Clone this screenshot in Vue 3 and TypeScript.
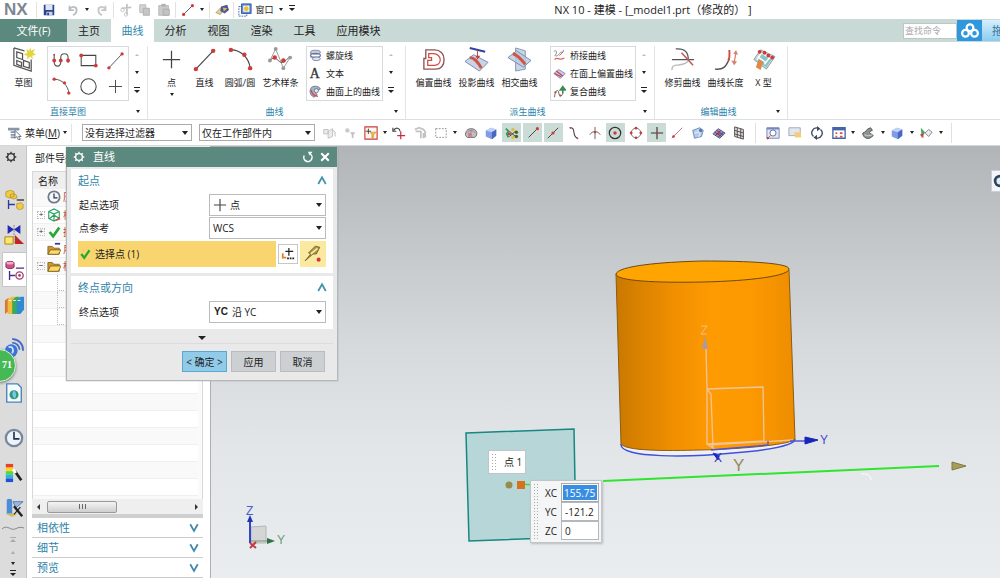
<script setup lang="ts">
import { ref } from 'vue'

const dot = (x: number, y: number, r = 1.8) => `<circle cx="${x}" cy="${y}" r="${r}" fill="#cf3a3a"/>`
const cube = '<path d="M2 5l6-3 6 2v7l-5 4-7-3z" fill="#7f9ce6"/><path d="M2 5l6-3 6 2-5 3z" fill="#c3d2fa"/><path d="M9 7l5-3v7l-5 4z" fill="#4a68be"/>'

/* 16 x 16 drawings */
const small: Record<string, string> = {
  save: '<path d="M2 2h12v12H2z" fill="#2d4391"/><path d="M4 2h8v6H4z" fill="#dfe6f2"/><path d="M5 10h7v4H5z" fill="#c9d1e4"/><path d="M6 11h2v3H6z" fill="#2d4391"/>',
  undo: '<path d="M4 3v5h5M4 7c3-4 9-3 8 2 0 2-2 4-4 5" fill="none" stroke="#b9bcc0" stroke-width="2"/>',
  redo: '<path d="M12 3v5H7M12 7c-3-4-9-3-8 2 0 2 2 4 4 5" fill="none" stroke="#c4c7ca" stroke-width="2"/>',
  cut: '<path d="M9 1v12M3 6l11-1" stroke="#bfc2c5" stroke-width="2"/><circle cx="4" cy="8" r="2" fill="none" stroke="#bfc2c5"/><circle cx="8" cy="13" r="2" fill="none" stroke="#bfc2c5"/>',
  copy: '<path d="M2 2h7v9H2z" fill="#d3d3d3" stroke="#b8b8b8"/><path d="M6 6h7v8H6z" fill="#c6c6c6" stroke="#adadad"/>',
  paste: '<path d="M2 3h11v11H2z" fill="#cbcbcb" stroke="#b5b5b5"/><path d="M5 1h5v3H5z" fill="#b0b0b0"/><path d="M7 7h7v7H7z" fill="#c2c2c2" stroke="#aaa"/>',
  line: '<path d="M3 13L13 3" stroke="#444"/>' + dot(3, 13) + dot(13, 3),
  brush: '<path d="M1 11l6-6 4 2-5 6z" fill="#e8d48a" stroke="#8a7a4a" stroke-width=".7"/><path d="M7 4l7-2 2 6-5 4-5-3z" fill="#44589f"/><path d="M9 5l5 1-4 4z" fill="#f0b23a"/>',
  windows: '<path d="M1 4h9v11H1z" fill="#fff" stroke="#3f63a8" stroke-dasharray="2 1"/><path d="M4 1h11v11H4z" fill="#5d8bd5" stroke="#2f56a0"/><path d="M6 3h7v7H6z" fill="#fff"/><circle cx="9.500" cy="6.500" r="2.800" fill="#f0c02c"/>',
  plus: '<path d="M8 1v14M1 8h14" stroke="#444" stroke-width="1.300"/>',
  helix: '<ellipse cx="8" cy="4" rx="6" ry="2.500" fill="#c8cde0" stroke="#6c789c"/><ellipse cx="8" cy="8" rx="6" ry="2.500" fill="none" stroke="#6c789c" stroke-width="1.500"/><ellipse cx="9" cy="12" rx="5" ry="2.300" fill="#dfe3ee" stroke="#6c789c"/><path d="M2 4v6h7" fill="none" stroke="#7c88ac"/>',
  letter: '<text x="1" y="14" font-family="Liberation Serif, serif" font-size="17" fill="#333" stroke="#333" stroke-width=".4">A</text>',
  surfcurve: '<path d="M3 3c4-3 10-1 11 2l-3 2c-3-2-4 2-1 5l-4 3C1 12 0 7 3 3z" fill="#a8b2c8" stroke="#5a6682"/><path d="M3 6c0 5 3 7 8 8" fill="none" stroke="#d34848" stroke-width="1.500"/><circle cx="9" cy="7" r="2.500" fill="#eef1f8" stroke="#5a6682"/>',
  bridge: '<path d="M1 3c4-3 4 3 2 4s1 3 4 0 1-3 3-3 3-1 3-3" fill="none" stroke="#777"/><path d="M2 13c3-4 5 2 12-2" fill="none" stroke="#d46a5c" stroke-width="1.500"/><path d="M8 8l5-5" stroke="#d24444"/>',
  offsurf: '<path d="M1 8l6-5 8 5-6 6z" fill="#c3cdee" stroke="#7182bb"/><path d="M4 5l8 6M2 8l8 4" stroke="#d13f3f" stroke-width="1.500"/>',
  composite: '<path d="M2 15c0-5 2-9 4-8s0 5 3 6 3-3 3-4" fill="none" stroke="#444"/><path d="M12 10V3M9 6l3-4 3 4z" fill="#3d8a52" stroke="#3d8a52" stroke-width="2"/>' + dot(3, 9, 1.4) + dot(9, 13, 1.4),
  menu: '<path d="M0 2h13v3H0zM3 6h6v2H3zM3 9h5v2H3zM3 12h5v2H3z" fill="#8796aa"/><path d="M8 5v9l2-2 2 4 2-1-2-3h3z" fill="#fff" stroke="#596577"/>',
  g1: '<path d="M2 4h5v5H2zM7 6l5-3v9l-5 2zM12 4l3 3v5" fill="#ececec" stroke="#bfbfbf"/>',
  g2: '<circle cx="5" cy="5" r="2.500" fill="#c9c9c9"/><path d="M8 7h6l-2 3v4l-2-1v-3z" fill="#c0c0c0"/>',
  filter: '<path d="M1 1h14v14H1z" fill="#fff6ee" stroke="#c93c3c" stroke-width="1.300"/><path d="M5 3v6M2 6h6" stroke="#333"/><path d="M7 7h7l-3 3v3l-2 1v-4z" fill="#f3bd4b" stroke="#b7822c" stroke-width=".6"/>',
  swap: '<path d="M2 5c2-4 7-3 7 1M1 2v4h4" fill="none" stroke="#444" stroke-width="1.300"/><path d="M10 6v9M6 11h9" stroke="#c22f3c" stroke-width="1.400"/>',
  g3: '<path d="M2 4l5-2 5 2 2 3v6M3 6h6v8M12 8v6" fill="none" stroke="#c2c2c2" stroke-width="2"/>',
  marquee: '<path d="M2 3h12v10H2z" fill="none" stroke="#888" stroke-dasharray="2 1.500"/>',
  shade: '<path d="M2 8c1-5 6-6 10-4 4 2 3 8 0 9H4c-2-1-3-3-2-5z" fill="#c5bcc0" stroke="#655c62"/><path d="M4 7c3-3 7-2 9 1M8 4v9" fill="none" stroke="#8d848b"/><path d="M5 7l4 3-4 3z" fill="#df7070"/>',
  cube,
  cluster: '<path d="M1 3l3 3-2 3 2 4" fill="none" stroke="#2a9a54" stroke-width="2"/><path d="M5 6l7 6M5 12l7-6" stroke="#333"/><circle cx="9" cy="4" r="2" fill="#dfc233"/><circle cx="9" cy="13" r="2" fill="#dfc233"/><circle cx="13" cy="7" r="2" fill="#555c2a"/><circle cx="13" cy="12" r="2" fill="#555c2a"/><circle cx="5" cy="9" r="1.700" fill="#c33"/>',
  endpt: '<path d="M3 13L13 3" stroke="#333"/>' + dot(13, 3),
  midpt: '<path d="M2 14L14 2" stroke="#333"/>' + dot(8, 8),
  bend: '<path d="M3 2c8-1 2 10 9 12" fill="none" stroke="#444" stroke-width="1.200"/>' + dot(4, 2, 1) + dot(12, 14, 1),
  cross: '<path d="M8 1v14M2 10c3-5 9-5 12 0" fill="none" stroke="#555"/>' + dot(8, 7, 1.4),
  center: '<circle cx="8" cy="8" r="6.500" fill="none" stroke="#333" stroke-width="1.400"/>' + dot(8, 8, 2),
  quad: '<circle cx="8" cy="8" r="5.500" fill="none" stroke="#666"/>' + dot(8, 2.5, 1.6) + dot(8, 13.5, 1.6) + dot(2.5, 8, 1.6) + dot(13.5, 8, 1.6),
  exist: '<path d="M8 1v14M1 8h14" stroke="#333" stroke-width="1.300"/>' + dot(8, 8, 1.2),
  tangent: '<path d="M2 14L14 2" stroke="#c06868"/>' + dot(4, 12, 1.5),
  face: '<path d="M2 5l8-3 4 3-2 7-8 2z" fill="#b5cbec" stroke="#6583ad"/><path d="M7 4c4 2 4 6 1 9M4 8l8-2" fill="none" stroke="#eef4ff"/><circle cx="11" cy="5" r="2" fill="#4f79b8"/>',
  mesh: '<path d="M1 9l6-6 8 5-6 6z" fill="#9b93c8" stroke="#565079"/><path d="M3 7l8 5M5 5l8 5M4 11l6-6M7 13l6-6" stroke="#42355e"/>' + dot(8, 8, 1.5),
  grid: '<path d="M3 1l10 3v11L3 12z" fill="#e9dede" stroke="#444"/><path d="M6 2v11M10 3v11M3 5l10 3M3 9l10 3" stroke="#444"/>',
  fit: '<path d="M1 2h14v12H1z" fill="#dfe6f6" stroke="#6f80b5"/><path d="M1 2h14v2H1z" fill="#7388c6"/><circle cx="8" cy="8" r="3.500" fill="#fff" stroke="#5c6688"/><path d="M5 11l-3 3" stroke="#d24444"/>' + dot(2, 14, 1.3),
  pan: '<path d="M1 2h13v9H1z" fill="#e3e6ef" stroke="#9aa3b8"/><path d="M7 7h8v6H8z" fill="#f1cf7a"/>',
  rotate: '<path d="M4 12A5.500 5.500 0 0 1 9 2.500M12 4a5.500 5.500 0 0 1-5 9.500" fill="none" stroke="#3c4963" stroke-width="1.500"/><path d="M8 0l4 3-4 3zM8 10v6l-4-3z" fill="#3c4963"/>',
  views: '<path d="M1 2h14v12H1z" fill="#fff" stroke="#4464ab" stroke-width="1.500"/><path d="M1 2h14v3H1z" fill="#4464ab"/><path d="M4 7h2v2H4zM9 7h3v2H9zM4 11h2v2H4zM9 11h3v2H9z" fill="#cf5050"/>',
  section: '<path d="M2 8c3 0 4-5 9-6l2 3c-4 1-4 4-1 4l2 2-4 3c-5 1-8-2-8-6z" fill="#8f9490" stroke="#434b46"/><path d="M4 10c3 2 6 1 9 0" fill="none" stroke="#ddd"/>',
  rank: '<path d="M2 2l5 5-4 7z" fill="#49a963"/><path d="M1 10l4-2v6z" fill="#cc4444"/><path d="M7 8l4-4 4 3-4 5z" fill="#ececf3" stroke="#7e7986"/>',
  gear: '<circle cx="8" cy="8" r="4.500" fill="none" stroke="currentColor" stroke-width="1.800"/><path d="M8 1v3M8 12v3M1 8h3M12 8h3M3 3l2 2M11 11l2 2M3 13l2-2M11 5l2-2" stroke="currentColor" stroke-width="1.800"/>',
  reset: '<path d="M3 6a5.500 5.500 0 1 0 8-2" fill="none" stroke="#fff" stroke-width="2"/><path d="M8 1h6l-4 5z" fill="#fff"/>',
  close: '<path d="M3 3l10 10M13 3L3 13" stroke="#fff" stroke-width="2.800"/>',
  up: '<path d="M3 12l5-9 5 9" fill="none" stroke="#4493ad" stroke-width="2.400"/>',
  down: '<path d="M3 3l5 9 5-9" fill="none" stroke="#4488ad" stroke-width="2.400"/>',
  tick: '<path d="M3 8l4 5 7-10" fill="none" stroke="#2aa737" stroke-width="3"/>',
  clock: '<circle cx="8" cy="8" r="6.500" fill="#f6f8fa" stroke="#6f7c8d" stroke-width="2"/><path d="M8 4v5h4" fill="none" stroke="#24344c" stroke-width="1.400"/>',
  box: '<path d="M2 4l6-3 6 3v8l-6 3-6-3zM2 4l6 3 6-3M8 7v8M3 12l5-4 6 4" fill="none" stroke="#29a162" stroke-width="1.300"/><path d="M10 14l5-2" stroke="#d34c3d" stroke-width="2"/>',
  folder: '<path d="M1 4h5l2 2h6v8H1z" fill="#c9962f" stroke="#6e4f16" stroke-width=".8"/><path d="M1 14l3-6h12l-3 6z" fill="#ffd968" stroke="#6e4f16" stroke-width=".8"/>',
  folderx: '<path d="M1 5h5l2 2h6v7H1z" fill="#c9962f" stroke="#6e4f16" stroke-width=".8"/><path d="M1 14l3-5h12l-3 5z" fill="#ffd968" stroke="#6e4f16" stroke-width=".8"/><path d="M9 2h6" stroke="#3b3690" stroke-width="2"/>',
  pointdlg: '<path d="M9 1v9M5 5h9" stroke="#222" stroke-width="1.400"/><path d="M2 7v5h4" fill="none" stroke="#e0812f" stroke-width="2"/><path d="M7 13h2M10 13h2M13 13h2" stroke="#222" stroke-width="2"/>',
  infer: '<path d="M1 14l5-6-2-1 6-6 4 1-3 6H8z" fill="#b09440" stroke="#655522" stroke-width=".7"/><path d="M12 3L6 8" stroke="#f6e7a4" stroke-width="1.500"/>' + dot(13, 13, 1.8),
  cloud: '<g fill="none" stroke="#fff" stroke-width="2"><circle cx="8" cy="5" r="3"/><circle cx="4" cy="10" r="3"/><circle cx="12" cy="10" r="3"/></g>',
}

/* 26 x 26 drawings */
const large: Record<string, string> = {
  sketch: '<path d="M3 1v18l18 6V13M3 1l11 3" fill="none" stroke="#555" stroke-width="1.300"/><path d="M6 5l6 2v6l-6-2zM6 14l5 2v4l-5-2zM13 14l6 2v6l-6-2z" fill="none" stroke="#555" stroke-width="1.300"/><path d="M20 0l1 4 4-2-2 4 3 2-4 1 1 4-3-3-3 3v-4l-4-1 4-2-1-4 3 2z" fill="#e3d441"/>',
  point: '<path d="M13 4v18M4 13h18" stroke="#444" stroke-width="1.300"/>',
  line: '<path d="M4 23L22 4" stroke="#444" stroke-width="1.200"/>' + dot(4, 23, 2.3) + dot(22, 4, 2.3),
  arc: '<path d="M3 3c11 0 19 9 20 19" fill="none" stroke="#444" stroke-width="1.200"/>' + dot(3, 3, 2.3) + dot(17, 8, 2.3) + dot(23, 22, 2.3),
  spline: '<path d="M2 14L8 2l8 20 7-11" fill="none" stroke="#999"/><path d="M2 14c7-7 8 3 13 2s4-5 8-5" fill="none" stroke="#555"/><g fill="#999"><circle cx="2" cy="14" r="2"/><circle cx="8" cy="2" r="2"/><circle cx="16" cy="22" r="2"/><circle cx="23" cy="11" r="2"/></g>' + dot(7, 11, 2.3) + dot(16, 14, 2.3),
  offset: '<path d="M5 3h9c6 0 10 4 10 10s-3 10-9 10H3V12h2z" fill="none" stroke="#8c5554" stroke-width="1.400"/><path d="M8 7h5c4 0 7 3 7 6s-2 6-6 6H7v-5h4v-3H8z" fill="none" stroke="#d24b42" stroke-width="1.300"/>',
  project: '<path d="M1 15l9-7 15 8-9 9z" fill="#c7d4ea" stroke="#7a8db2"/><path d="M6 11c5 0 8 4 12 11" fill="none" stroke="#d0553e" stroke-width="3"/><path d="M6 1l16 4" stroke="#3142a0" stroke-width="2"/><path d="M14 3v7" stroke="#b54444"/><path d="M12 9h5l-3 4z" fill="#c63a3a"/>',
  intersect: '<path d="M9 1l10 3v19l-10 2z" fill="#c8d6e6" stroke="#8195b4"/><path d="M1 11l9-7 15 10-8 7z" fill="#b8c9e4" stroke="#7a8db2" fill-opacity=".8"/><path d="M6 7c5 1 9 6 13 11" fill="none" stroke="#d0563e" stroke-width="3"/>',
  trim: '<path d="M6 2c10-1 13 4 13 11M2 13h23" fill="none" stroke="#555" stroke-width="1.300"/><path d="M2 24c0-7 5-4 11-6 4-1 6-3 6-5" fill="none" stroke="#bbb" stroke-width="1.500"/><path d="M12 6l12 13" stroke="#c55656" stroke-width="1.600"/>',
  length: '<path d="M2 23c9 1 12-3 15-11" fill="none" stroke="#555" stroke-width="1.500"/><path d="M16 14c2-4 1-7 1-11" fill="none" stroke="#cf4c43" stroke-width="2"/><path d="M24 5l-2 11" stroke="#cf7a63" stroke-width="1.200"/><path d="M21 7l3-4 2 5zM19 14l3 5 3-4z" fill="#d68468"/>',
  xform: '<path d="M3 13L10 3l15 7-9 13z" fill="#cfdcdc" stroke="#8b9b9b"/><path d="M4 14l6-7 12 5-6 9z" fill="#86c6cb"/><path d="M7 10l8 6M11 6l9 6M6 14l5-8M14 18l6-8" stroke="#fff" stroke-width="1.500"/><path d="M8 13l5 2-3 9-5-3z" fill="#e08a4a"/>' + dot(9, 5, 2) + dot(14, 6, 2) + dot(18, 9, 2) + dot(22, 11, 2),
  snake: '<path d="M3 5v9c0 9 9 9 9 0V9c0-7 10-7 10 0v7" fill="none" stroke="#555" stroke-width="1.500"/>' + dot(3, 13, 2.6) + dot(12, 13, 2.6) + dot(22, 13, 2.6) + dot(3, 5, 1.3),
  rect: '<path d="M3 6h20v14H3z" fill="none" stroke="#444" stroke-width="1.400"/>' + dot(3, 6, 2.6) + dot(23, 20, 2.6),
  circle: '<circle cx="13" cy="13" r="10.500" fill="none" stroke="#444" stroke-width="1.400"/>',
}

/* 22 x 22 drawings of the resource bar */
const bar: Record<string, string> = {
  assembly: '<g fill="#f2cb43" stroke="#a8831e" stroke-width=".7"><path d="M2 2l5-2 4 2v5l-5 2-4-2zM7 5l4-1 3 2v3l-4 1-3-2zM14 15l5-1 2 2v4l-4 2-3-2z"/></g><path d="M5 11v10M5 16h7" stroke="#3138a0" stroke-width="1.500"/><path d="M14 11h8" stroke="#333" stroke-width="1.500"/>',
  constraint: '<path d="M4 0l7 5-7 5zM18 0l-7 5 7 5z" fill="#2328b4"/><path d="M11 0v20" stroke="#777" stroke-dasharray="2 1"/><path d="M1 13h9v8H1z" fill="#ffe766" stroke="#9e8120"/><path d="M12 11l10 10H12z" fill="#c52323"/>',
  part: '<path d="M1 3c1-2 8-2 9 0v5c-1 2-8 2-9 0z" fill="#cc5187" stroke="#833055"/><ellipse cx="5.500" cy="3.500" rx="4" ry="1.500" fill="#efabc9"/><path d="M12 9h9M5 12v10M5 17h6" stroke="#42318a" stroke-width="1.500"/><circle cx="16" cy="17" r="4" fill="none" stroke="#a3406c" stroke-width="1.500"/><circle cx="16" cy="17" r="1.500" fill="#a3406c"/>',
  library: '<path d="M1 6l4-3v15l-4 3z" fill="#d67935"/><path d="M4 6l4-4h4v16l-3 3H4z" fill="#f1bc3a"/><path d="M9 6l4-4h4v16l-3 3H9z" fill="#3ea85a"/><path d="M14 6l4-4h4v14l-4 5h-4z" fill="#2f8bd0"/><path d="M5 6h3M10 6h3M15 6h3" stroke="#fff"/>',
  web: '<circle cx="8" cy="14" r="7" fill="#3b72d5"/><path d="M5 10c5-1 6 3 4 7" fill="none" stroke="#d3e4ff" stroke-width="2"/><path d="M9 1c8 1 12 6 12 13M9 5c5 0 8 4 8 8" fill="none" stroke="#426bc3" stroke-width="2"/>',
  doc: '<path d="M3 1h12l4 4v16H3z" fill="#f6fbff" stroke="#4a85b4" stroke-width="1.500"/><circle cx="11" cy="13" r="5" fill="#2d9b76"/><path d="M11 8c3 3 3 6 1 9-3-2-4-5-1-9z" fill="#7cc4e8"/>',
  history: '<circle cx="11" cy="11" r="9" fill="#edf3f9" stroke="#77889c" stroke-width="2.500"/><path d="M11 4v8h6" fill="none" stroke="#1f3357" stroke-width="1.800"/>',
  palette: '<path d="M2 1h8v4H2z" fill="#e94224"/><path d="M2 5h8v4H2z" fill="#ffd51f"/><path d="M2 9h8v4H2z" fill="#5bd63b"/><path d="M2 13h8v4H2z" fill="#26b6e8"/><path d="M2 17h8v4H2z" fill="#2252d0"/><path d="M12 9l7 10" stroke="#222" stroke-width="3"/><path d="M10 7l3 4" stroke="#fff" stroke-width="3"/>',
  roles: '<path d="M1 17h14l-6 4z" fill="#d7bb5e"/><path d="M3 2c2-2 6-1 6 1v14H3z" fill="#4c8dd3"/><path d="M10 4h11l-8 7z" fill="#9ab6db" stroke="#537cb4"/><path d="M11 9l9 11" stroke="#222" stroke-width="2.600"/><path d="M18 10l-7 8" stroke="#222" stroke-width="1.300"/>',
}

const tabs = ['主页', '曲线', '分析', '视图', '渲染', '工具', '应用模块']
const activeTab = ref('曲线')

const gallery = ['snake', 'rect', 'line', 'arc', 'circle', 'point']

interface Tool { icon: string; label: string; w: string; drop?: boolean }
interface Group { name: string; cls: string; tools: Tool[]; list: { icon: string; label: string }[] }
const groups: Group[] = [
  {
    name: '曲线', cls: 'curve',
    tools: [
      { icon: 'point', label: '点', w: 'narrow', drop: true },
      { icon: 'line', label: '直线', w: 'narrow' },
      { icon: 'arc', label: '圆弧/圆', w: 'mid' },
      { icon: 'spline', label: '艺术样条', w: 'wide' },
    ],
    list: [{ icon: 'helix', label: '螺旋线' }, { icon: 'letter', label: '文本' }, { icon: 'surfcurve', label: '曲面上的曲线' }],
  },
  {
    name: '派生曲线', cls: 'derived',
    tools: [
      { icon: 'offset', label: '偏置曲线', w: 'wide' },
      { icon: 'project', label: '投影曲线', w: 'wide' },
      { icon: 'intersect', label: '相交曲线', w: 'wide' },
    ],
    list: [{ icon: 'bridge', label: '桥接曲线' }, { icon: 'offsurf', label: '在面上偏置曲线' }, { icon: 'composite', label: '复合曲线' }],
  },
  {
    name: '编辑曲线', cls: 'edit',
    tools: [
      { icon: 'trim', label: '修剪曲线', w: 'wide' },
      { icon: 'length', label: '曲线长度', w: 'wide' },
      { icon: 'xform', label: 'X 型', w: 'narrow' },
    ],
    list: [],
  },
]

interface SelTool { icon: string; title: string; on?: boolean; drop?: boolean }
const selectTools: SelTool[] = [
  { icon: 'g1', title: '组件' }, { icon: 'g2', title: '细节过滤' }, { icon: 'filter', title: '过滤', drop: true },
  { icon: 'swap', title: '重置' }, { icon: 'g3', title: '恢复' }, { icon: 'marquee', title: '框选', drop: true },
]
const snapTools: SelTool[] = [
  { icon: 'shade', title: '高亮' }, { icon: 'cube', title: '体' }, { icon: 'cluster', title: '捕捉点', on: true },
  { icon: 'endpt', title: '端点', on: true }, { icon: 'midpt', title: '中点', on: true }, { icon: 'bend', title: '控制点' },
  { icon: 'cross', title: '交点' }, { icon: 'center', title: '圆心', on: true }, { icon: 'quad', title: '象限点' },
  { icon: 'exist', title: '现有点', on: true }, { icon: 'tangent', title: '相切' }, { icon: 'face', title: '面上的点' },
  { icon: 'mesh', title: '网格' }, { icon: 'grid', title: '栅格点' },
]
const viewTools: SelTool[] = [
  { icon: 'fit', title: '适合窗口' }, { icon: 'pan', title: '缩放' }, { icon: 'rotate', title: '旋转' },
  { icon: 'views', title: '视图', drop: true }, { icon: 'section', title: '剖切', drop: true },
  { icon: 'cube', title: '着色', drop: true }, { icon: 'rank', title: '显示', drop: true },
]

const resources = [
  { icon: 'assembly', title: '装配' }, { icon: 'constraint', title: '约束' }, { icon: 'part', title: '部件', on: true },
  { icon: 'library', title: '重用库' }, { icon: 'web', title: '浏览器' }, { icon: 'doc', title: '文档' },
  { icon: 'history', title: '历史' }, { icon: 'palette', title: '材料' }, { icon: 'roles', title: '角色' },
]

const tree = [
  { icon: 'clock', sign: '', text: '历' },
  { icon: 'box', sign: '+', text: '模' },
  { icon: 'tick', sign: '+', text: '摄' },
  { icon: 'folderx', sign: '', text: '用' },
  { icon: 'folder', sign: '−', text: '模' },
]
const panels = ['相依性', '细节', '预览']

const startOption = ref('点')
const reference = ref('WCS')
const endOption = ref('沿 YC')
const coords = ref([
  { axis: 'XC', value: '155.75' },
  { axis: 'YC', value: '-121.2' },
  { axis: 'ZC', value: '0' },
])
</script>

<template>
  <div class="app">
    <header class="titlebar">
      <b class="brand">NX</b>
      <i class="sep"></i>
      <button class="qa" aria-label="保存"><svg viewBox="0 0 16 16" v-html="small.save" /></button>
      <i class="sep clear"></i>
      <button class="qa" aria-label="撤消"><svg viewBox="0 0 16 16" v-html="small.undo" /></button>
      <i class="tri"></i>
      <button class="qa" aria-label="重做"><svg viewBox="0 0 16 16" v-html="small.redo" /></button>
      <i class="sep"></i>
      <button class="qa" aria-label="剪切"><svg viewBox="0 0 16 16" v-html="small.cut" /></button>
      <button class="qa" aria-label="复制"><svg viewBox="0 0 16 16" v-html="small.copy" /></button>
      <button class="qa" aria-label="粘贴"><svg viewBox="0 0 16 16" v-html="small.paste" /></button>
      <i class="sep"></i>
      <button class="qa" aria-label="直线"><svg viewBox="0 0 16 16" v-html="small.line" /></button>
      <i class="tri"></i>
      <i class="sep"></i>
      <button class="qa" aria-label="格式"><svg viewBox="0 0 16 16" v-html="small.brush" /></button>
      <i class="sep"></i>
      <button class="win"><svg viewBox="0 0 16 16" v-html="small.windows" />窗口</button>
      <i class="tri"></i>
      <i class="tri bar"></i>
      <h1>NX 10 - 建模 - [_model1.prt（修改的） ]</h1>
    </header>

    <nav class="tabs">
      <button class="file">文件(F)</button>
      <button v-for="t in tabs" :key="t" class="tab" :class="{ on: t === activeTab }" @click="activeTab = t">{{ t }}</button>
      <input class="search" aria-label="查找命令" placeholder="查找命令" />
      <button class="cloud" aria-label="云"><svg viewBox="0 0 16 16" v-html="small.cloud" /></button>
      <button class="drag">拖</button>
    </nav>

    <section class="ribbon">
      <div class="group sketch">
        <div class="tools">
          <button class="tool wide"><svg viewBox="0 0 26 26" v-html="large.sketch" /><span>草图</span></button>
          <div class="gallery">
            <button v-for="g in gallery" :key="g" :aria-label="g"><svg viewBox="0 0 26 26" v-html="large[g]" /></button>
          </div>
          <div class="scroller"><i class="tri off"></i><i class="tri"></i><i class="tri bar"></i></div>
        </div>
        <div class="caption"><span>直接草图</span><i class="tri"></i></div>
      </div>
      <div v-for="g in groups" :key="g.name" class="group" :class="g.cls">
        <div class="tools">
          <button v-for="t in g.tools" :key="t.label" class="tool" :class="t.w">
            <svg viewBox="0 0 26 26" v-html="large[t.icon]" /><span>{{ t.label }}</span><i v-if="t.drop" class="tri"></i>
          </button>
          <div v-if="g.list.length" class="list">
            <button v-for="l in g.list" :key="l.label"><svg viewBox="0 0 16 16" v-html="small[l.icon]" />{{ l.label }}</button>
          </div>
          <div v-if="g.list.length" class="scroller"><i class="tri off"></i><i class="tri"></i><i class="tri bar"></i></div>
        </div>
        <div class="caption"><span>{{ g.name }}</span><i class="tri"></i></div>
      </div>
    </section>

    <section class="selbar">
      <button class="menu"><svg viewBox="0 0 16 16" v-html="small.menu" /><span>菜单(<u>M</u>)</span><i class="tri"></i></button>
      <label class="combo filter"><select aria-label="选择过滤器"><option>没有选择过滤器</option></select><i class="tri big"></i></label>
      <label class="combo scope"><select aria-label="选择范围"><option>仅在工作部件内</option></select><i class="tri big"></i></label>
      <div class="strip pick">
        <template v-for="s in selectTools" :key="s.title">
          <button :aria-label="s.title"><svg viewBox="0 0 16 16" v-html="small[s.icon]" /></button><i v-if="s.drop" class="tri"></i>
        </template>
      </div>
      <div class="strip snap">
        <button v-for="s in snapTools" :key="s.title" :class="{ on: s.on }" :aria-label="s.title"><svg viewBox="0 0 16 16" v-html="small[s.icon]" /></button>
      </div>
      <div class="strip view">
        <template v-for="s in viewTools" :key="s.title">
          <button :aria-label="s.title"><svg viewBox="0 0 16 16" v-html="small[s.icon]" /></button><i v-if="s.drop" class="tri"></i>
        </template>
      </div>
    </section>

    <main class="work">
      <aside class="resources">
        <button class="cog" aria-label="设置"><svg viewBox="0 0 16 16" v-html="small.gear" /></button>
        <button v-for="r in resources" :key="r.icon" class="res" :class="[r.icon, { on: r.on }]" :aria-label="r.title"><svg viewBox="0 0 22 22" v-html="bar[r.icon]" /></button>
        <div class="paging">
          <svg class="wave" viewBox="0 0 24 6"><path d="M1 4c5-5 9 2 13 0s6-2 9-1" fill="none" stroke="#888" /></svg>
          <i class="tri upw bar"></i><i class="tri upw"></i><i class="tri"></i><i class="tri bar"></i>
        </div>
        <b class="badge">71</b>
      </aside>

      <aside class="navigator">
        <h2>部件导航器</h2>
        <div class="treebox">
          <table>
            <thead><tr><th>名称</th></tr></thead>
            <tbody>
              <tr v-for="(r, i) in tree" :key="i">
                <td><div class="node"><i class="sign" :class="{ boxed: r.sign }">{{ r.sign }}</i><svg viewBox="0 0 16 16" v-html="small[r.icon]" /><span>{{ r.text }}</span></div></td>
              </tr>
              <tr v-for="n in 14" :key="'e' + n"><td><i v-if="n < 4" class="branch"></i></td></tr>
            </tbody>
          </table>
        </div>
        <div class="hscroll"><i class="arrow left"></i><span class="thumb"><i></i><i></i><i></i></span><i class="arrow right"></i></div>
        <button v-for="p in panels" :key="p" class="panel"><span>{{ p }}</span><svg viewBox="0 0 16 16" v-html="small.down" /></button>
      </aside>

      <section class="canvas">
        <svg class="scene">
          <defs>
            <linearGradient id="side" x1="0" x2="1">
              <stop offset="0" stop-color="#c97800" /><stop offset=".12" stop-color="#d98100" />
              <stop offset=".32" stop-color="#f08f00" /><stop offset=".55" stop-color="#ff9b02" />
              <stop offset=".75" stop-color="#fd9900" /><stop offset="1" stop-color="#ed8d00" />
            </linearGradient>
          </defs>
          <g transform="translate(-211 -146)">
            <path d="M621 444C619 459 693 457 733 453c38-3 62-8 62-14" fill="#eef0f8" stroke="#4150d8" stroke-width="1.500" />
            <path d="M616 274L621 444C626 451 665 451 700 450c47-1 93-6 95-11L789 270z" fill="url(#side)" stroke="#8c5b14" />
            <path d="M616 274c2-8 44-12 87-13 46 0 86 2 86 8 0 7-39 12-86 13-46 1-87-1-87-8z" fill="#ffa400" stroke="#6e4a12" />
            <g fill="none" stroke="#f2c49b" stroke-width="1.300">
              <path d="M706 345l1 44 56-2 1 54-57 3v-55l4 5 2 54-6-4" />
              <path d="M708 445l85-5" />
            </g>
            <path d="M702 349l3-13 3 13z" fill="#a99ba0" />
            <path d="M701 326h6l-6 8h6" fill="none" stroke="#efc18f" />
            <path d="M711 450l57-5v-4M790 441h16" fill="none" stroke="#4a55dc" stroke-width="1.300" />
            <path d="M805 437l13 3-13 4zM713 453l6 3-1 4z" fill="#1825b8" stroke="#1825b8" />
            <text x="820" y="444" class="axis" fill="#4449d2">Y</text>
            <text x="714" y="462" class="axis" fill="#2930c8">X</text>
            <text x="733" y="471" class="axis wide" fill="#948b5d">Y</text>
            <path d="M603 481l336-15" stroke="#2fe52f" stroke-width="2" />
            <path d="M952 462l14 4-14 4z" fill="#a99d55" stroke="#81783f" />
            <path d="M861 474c5-1 10 1 10 6" fill="none" stroke="#fff" stroke-width="1" />
            <path d="M466 433l108-4 2 108-107 4z" fill="#b6d6d7" stroke="#168781" stroke-width="1.500" />
            <path d="M521 484l12 1" stroke="#2fe52f" stroke-width="1.500" />
            <circle cx="509" cy="485" r="3.500" fill="#9a8a4c" />
            <path d="M517 481h8v8h-8z" fill="#d7721c" />
            <path d="M251 527l15-1v17h-15z" fill="#d4d6d6" stroke="#b4b6b8" />
            <path d="M250 543v-22" stroke="#3246c8" stroke-width="2" />
            <path d="M247 522l3-7 3 7z" fill="#1f35b8" />
            <path d="M251 541h18" stroke="#789579" />
            <path d="M267 538l8 3-8 3z" fill="#2d7140" />
            <text x="246" y="515" class="axis" fill="#4761c8">Z</text>
            <text x="277" y="544" class="axis" fill="#699a76">Y</text>
            <path d="M250 543l6 5M256 542l-6 6" stroke="#c53b44" stroke-width="2" />
          </g>
        </svg>
        <div class="point"><i class="grip"></i><span>点 1</span></div>
        <div class="coords">
          <i class="grip"></i>
          <div class="fields">
            <label v-for="(c, i) in coords" :key="c.axis"><span>{{ c.axis }}</span><input v-model="c.value" :class="{ picked: i === 0 }" /></label>
          </div>
        </div>
        <button class="sidetab" aria-label="展开"><svg viewBox="0 0 9 22"><path d="M9 4a7 7 0 0 0 0 14z" fill="#2f4261" /><path d="M9 7a4 4 0 0 0 0 8z" fill="#e1edf6" /></svg></button>
      </section>

      <form class="dialog" @submit.prevent>
        <div class="head">
          <svg viewBox="0 0 16 16" v-html="small.gear" /><h2>直线</h2>
          <button type="button" aria-label="重置"><svg viewBox="0 0 16 16" v-html="small.reset" /></button>
          <button type="button" aria-label="关闭"><svg viewBox="0 0 16 16" v-html="small.close" /></button>
        </div>
        <fieldset>
          <button type="button" class="fold"><span>起点</span><svg viewBox="0 0 16 16" v-html="small.up" /></button>
          <div class="row"><label for="start">起点选项</label>
            <div class="combo"><svg viewBox="0 0 16 16" v-html="small.plus" /><select id="start" v-model="startOption"><option>点</option></select><i class="tri big"></i></div>
          </div>
          <div class="row"><label for="refr">点参考</label>
            <div class="combo"><select id="refr" v-model="reference" class="flush"><option>WCS</option></select><i class="tri big"></i></div>
          </div>
          <div class="row pickrow">
            <button type="button" class="selected"><svg viewBox="0 0 16 16" v-html="small.tick" />选择点 (1)</button>
            <button type="button" class="ptdlg" aria-label="点对话框"><svg viewBox="0 0 16 16" v-html="small.pointdlg" /></button>
            <button type="button" class="infer" aria-label="自动判断的点"><svg viewBox="0 0 16 16" v-html="small.infer" /></button>
          </div>
        </fieldset>
        <fieldset>
          <button type="button" class="fold"><span>终点或方向</span><svg viewBox="0 0 16 16" v-html="small.up" /></button>
          <div class="row"><label for="end">终点选项</label>
            <div class="combo"><b>YC</b><select id="end" v-model="endOption"><option>沿 YC</option></select><i class="tri big"></i></div>
          </div>
        </fieldset>
        <div class="more"><i class="tri big"></i></div>
        <div class="actions">
          <button class="ok">&lt; 确定 &gt;</button><button type="button">应用</button><button type="button">取消</button>
        </div>
      </form>
    </main>
  </div>
</template>

<style>
html, body { margin: 0; height: 100%; overflow: hidden; }
</style>

<style scoped>
.app { display: flex; flex-direction: column; height: 100vh; background: #fff; color: #222; font: 10px/14px "Open Sans", "Noto Sans CJK SC", sans-serif; overflow: hidden; }
.app * { box-sizing: border-box; }
button { margin: 0; padding: 0; border: 0; background: none; color: inherit; font: inherit; display: flex; align-items: center; justify-content: center; white-space: nowrap; }
h1, h2 { margin: 0; font-weight: normal; white-space: nowrap; }
svg { display: block; flex: none; width: 14px; height: 14px; }
.tri { flex: none; display: block; width: 0; border: 2px solid transparent; border-top: 3px solid #222; border-bottom: 0; position: relative; }
.tri.big { border-width: 4px 4px 0; }
.tri.off { border-top: 0; border-bottom: 2px solid #bbb; }
.tri.upw { border-top: 0; border-bottom: 3px solid #aaa; }
.tri.bar { border-width: 3px 3px 0; }
.tri.bar::before { content: ""; position: absolute; left: -3px; top: -6px; width: 6px; height: 1px; background: #222; }
.tri.upw.bar { border-width: 0 3px 3px; }
.tri.upw.bar::before { background: #aaa; top: -2px; }

.titlebar { display: flex; align-items: center; height: 19px; flex: none; padding-left: 4px; }
.titlebar .brand { width: 30px; font: bold 17px/19px "Liberation Sans", sans-serif; color: #7d8791; }
.sep { width: 1px; height: 16px; background: #e2e2e2; flex: none; margin: 0 2px; }
.sep.clear { background: none; }
.qa { width: 19px; flex: none; }
.titlebar .tri { margin: 0 3px; }
.win { width: 40px; gap: 3px; font-size: 9px; }
.titlebar h1 { flex: 1; text-align: center; padding-left: 8px; font-size: 11px; line-height: 16px; }

.tabs { display: flex; align-items: center; height: 23px; flex: none; background: #c9d9d5; font-size: 11px; overflow: hidden; }
.file { width: 67px; height: 23px; background: #5c897e; color: #fff; }
.tab { height: 23px; width: 43px; flex: none; }
.file + .tab { width: 44px; }
.tab:nth-of-type(8) { width: 65px; }
.tab.on { background: #fff; color: #2d87ad; }
.search { margin-left: auto; width: 54px; height: 16px; padding: 0 1px; border: 1px solid #bcc8c4; background: #fff; font: inherit; font-size: 9px; }
.search::placeholder { color: #aaa; opacity: 1; }
.cloud { width: 25px; height: 21px; background: #2e97dd; }
.cloud svg { width: 18px; height: 18px; }
.drag { width: 18px; height: 21px; background: linear-gradient(#d5effd, #8cccf1); color: #41759a; justify-content: flex-start; padding-left: 10px; overflow: hidden; }

.ribbon { display: flex; height: 78px; flex: none; border-bottom: 1px solid #dcdfe1; padding: 4px 0 0; font-size: 9px; line-height: 13px; }
.group { display: flex; flex-direction: column; justify-content: space-between; border-right: 1px solid #e2e4e5; }
.group.sketch { width: 148px; }
.group.curve { width: 258px; padding-left: 7px; }
.group.derived { width: 249px; padding-left: 6px; }
.group.edit { width: 133px; padding-left: 6px; }
.tools { display: flex; }
.tool { flex-direction: column; justify-content: flex-start; height: 55px; }
.tool svg { width: 25px; height: 25px; margin: 1px 0 4px; }
.tool .tri { margin-top: 4px; }
.tool.narrow { width: 33px; }
.tool.mid { width: 38px; }
.tool.wide { width: 43px; }
.sketch .tool.wide { width: 47px; }
.gallery { display: grid; grid-template-columns: repeat(3, 27px); height: 55px; border: 1px solid #d7dadd; width: 82px; }
.gallery svg { width: 19px; height: 19px; }
.list { display: flex; flex-direction: column; border: 1px solid #d7dadd; height: 55px; }
.curve .list { width: 77px; margin-left: 4px; }
.derived .list { width: 86px; margin-left: 9px; }
.list button { flex: 1; justify-content: flex-start; gap: 4px; padding-left: 2px; }
.list svg { width: 13px; height: 13px; }
.scroller { width: 15px; display: flex; flex-direction: column; align-items: center; justify-content: space-around; }
.caption { display: flex; align-items: center; color: #2b83ab; padding-right: 7px; height: 15px; }
.caption span { flex: 1; text-align: center; }

.selbar { display: flex; align-items: center; height: 26px; flex: none; border-bottom: 1px solid #d5d8d9; }
.menu { width: 72px; height: 18px; gap: 3px; padding-left: 4px; border-right: 1px solid #e3e3e3; }
.combo { display: flex; align-items: center; position: relative; border: 1px solid #aaa; background: #fff; height: 17px; }
.combo select { appearance: none; border: 0; padding: 0 2px; margin: 0; background: none; color: inherit; font: inherit; flex: 1; min-width: 0; outline: none; }
.combo .tri { margin-right: 3px; border-width: 4px 3px 0; }
.combo.filter { width: 110px; margin-left: 10px; }
.combo.scope { width: 116px; margin-left: 7px; }
.strip { display: flex; align-items: center; justify-content: space-between; flex: none; }
.strip button { width: 19px; height: 19px; }
.strip button.on { background: #cbdcd7; }
.pick { width: 138px; margin-left: 4px; }
.snap { width: 288px; margin-left: 4px; }
.view { width: 197px; height: 20px; margin-left: 6px; padding: 0 8px 0 7px; border: solid #e0e0e0; border-width: 0 1px; }

.work { display: flex; flex: 1; min-height: 0; position: relative; }
.resources { position: relative; display: flex; flex-direction: column; align-items: flex-end; width: 27px; background: #dcdcdd; border-right: 1px solid #c6c6c6; }
.cog { width: 27px; height: 22px; color: #333; padding-right: 3px; }
.cog svg { width: 12px; height: 12px; }
.res { width: 24px; flex: none; height: 35px; }
.res.assembly { margin-top: 14px; }
.res.web { margin-top: 8px; }
.res.doc, .res.history { margin-top: 10px; }
.res svg { width: 20px; height: 20px; }
.res.on { background: #fff; border: 1px solid #c6c6c6; border-right: 0; }
.wave { width: 24px; height: 6px; }
.paging { flex: 1; display: flex; flex-direction: column; width: 27px; align-items: center; justify-content: space-between; min-height: 50px; padding-bottom: 2px; }
.badge { position: absolute; left: -17px; top: 203px; width: 33px; height: 33px; border: 1px solid #ddf4df; border-radius: 50%; background: #45b956; color: #fff; box-shadow: 0 1px 3px #777; font: bold 10px/30px "Liberation Serif", serif; text-align: right; padding-right: 3px; }

.navigator { width: 184px; display: flex; flex-direction: column; padding: 0 7px 0 5px; background: #fff; border-right: 1px solid #aab0b4; }
.navigator h2 { height: 25px; flex: none; font-size: 10px; line-height: 25px; padding-left: 3px; overflow: hidden; }
.treebox { flex: 1; min-height: 0; overflow: hidden; border: 1px solid #d8d8d8; border-bottom: 0; }
table { width: 100%; border-collapse: collapse; border-right: 4px solid #fafafa; }
th { height: 17px; padding: 0 5px; background: #efefef; font-weight: normal; text-align: left; }
td { height: 17px; padding: 0; border-bottom: 1px solid #f0f0f0; }
tr:nth-child(odd) td { background: #f9f9f9; }
.node { display: flex; align-items: center; gap: 2px; height: 16px; padding-left: 4px; color: #c44336; overflow: hidden; }
.node svg { width: 14px; height: 14px; }
.sign { width: 8px; height: 8px; font: normal 8px/7px "Liberation Sans", sans-serif; text-align: center; color: #333; }
.sign.boxed { border: 1px dotted #bbb; line-height: 6px; }
.branch { display: block; width: 7px; height: 16px; margin-left: 24px; border: dotted #bbb; border-width: 0 0 1px 1px; }
.hscroll { display: flex; align-items: center; height: 19px; flex: none; padding: 0 5px; background: #efefef; border-bottom: 4px solid #cfcfcf; }
.thumb { display: flex; align-items: center; justify-content: center; gap: 2px; width: 70px; height: 12px; margin: 0 auto 0 7px; border: 1px solid #999; border-radius: 2px; background: linear-gradient(#f4f4f4, #cfcfcf); }
.thumb i { width: 1px; height: 5px; background: #666; }
.arrow { border: 3px solid transparent; border-left: 3px solid #333; border-right: 0; }
.arrow.left { border-right: 3px solid #333; border-left: 0; }
.panel { height: 20px; flex: none; justify-content: space-between; padding: 0 3px 0 5px; border-bottom: 1px solid #ccc; color: #2d83a8; font-size: 11px; }
.panel svg { width: 12px; height: 12px; }

.canvas { flex: 1; position: relative; min-width: 0; overflow: hidden; background: linear-gradient(#b1b5b7 0, #c5c9cb 25%, #d6d9db 45%, #e3e6e8 70%, #e9edef 100%); }
.scene { width: 100%; height: 100%; }
.axis { font: 12px "Liberation Sans", sans-serif; }
.axis.wide { font-size: 17px; }
.point { position: absolute; left: 277px; top: 304px; display: flex; align-items: center; gap: 7px; width: 38px; height: 24px; padding: 2px; background: #fff; border: 1px solid #bfc5c8; white-space: nowrap; }
.grip { width: 6px; align-self: stretch; flex: none; background-image: radial-gradient(#aaa 1px, transparent 1px); background-size: 3px 3px; }
.coords { position: absolute; left: 319px; top: 334px; display: flex; gap: 6px; width: 72px; padding: 2px; background: #f3f5f6; border: 1px solid #bfc5c8; box-shadow: 1px 1px 2px #bbb; }
.fields { flex: 1; display: flex; flex-direction: column; }
.fields label { display: flex; height: 19px; align-items: center; justify-content: space-between; }
.fields input { width: 38px; height: 19px; padding: 0 3px; border: 1px solid #b5b8ba; background: #fff; color: #222; font: inherit; }
.fields input.picked { background: #3a8ee2; color: #fff; border: 2px solid #fff; outline: 1px solid #aaa; outline-offset: -1px; padding: 0 1px; }
.sidetab { position: absolute; right: 0; top: 24px; width: 9px; height: 22px; background: #f4f7f9; border: 1px solid #ccd; border-right: 0; }
.sidetab svg { width: 8px; height: 20px; }

.dialog { position: absolute; left: 66px; top: 1px; width: 272px; padding-bottom: 8px; background: #e9e9e9; border: 1px solid #b3b8ba; border-top: 0; box-shadow: 0 0 1px #888; }
.head { display: flex; align-items: center; gap: 5px; height: 20px; margin: 0 0 2px -1px; padding: 0 6px 0 7px; background: #5c897f; color: #fff; }
.head h2 { flex: 1; font-size: 11px; line-height: 20px; padding-left: 3px; }
.head svg { width: 12px; height: 12px; }
.dialog fieldset { margin: 0 4px 3px; border: 0; padding: 0 7px 6px; background: #fff; min-width: 0; }
.fold { width: 100%; height: 24px; justify-content: space-between; color: #2d83a8; font-size: 11px; }
.fold svg { width: 12px; height: 12px; margin-right: -2px; }
.row { display: flex; align-items: center; height: 23px; padding: 0 0 0 1px; }
.row label { flex: 1; }
.row .combo { width: 117px; height: 22px; padding-left: 3px; border-color: #bbb; }
.row .combo select { height: 20px; padding: 0 3px; }
.row .combo select.flush { padding: 0; }
.row b { font: bold 10px/14px "Liberation Sans", sans-serif; padding: 0 1px; }
.pickrow { height: 27px; margin-top: 1px; gap: 2px; padding: 0; }
.selected { flex: 1; height: 26px; justify-content: flex-start; gap: 4px; padding-left: 1px; background: #f9d570; }
.selected svg { width: 12px; height: 12px; }
.ptdlg { width: 20px; height: 20px; border: 1px solid #c7c7c7; background: #fff; }
.infer { width: 26px; height: 26px; background: #fbe9a0; }
.infer svg { width: 18px; height: 18px; }
.more { display: flex; justify-content: center; align-items: center; height: 12px; margin: 0 4px 7px; border-bottom: 1px solid #dcdcdc; }
.actions { display: flex; justify-content: flex-end; gap: 4px; padding-right: 12px; }
.actions button { width: 45px; height: 21px; background: #ccd0d2; border: 1px solid #b9bdbf; }
.actions .ok { background: #90cbe9; border-color: #5ea7cc; }
</style>
